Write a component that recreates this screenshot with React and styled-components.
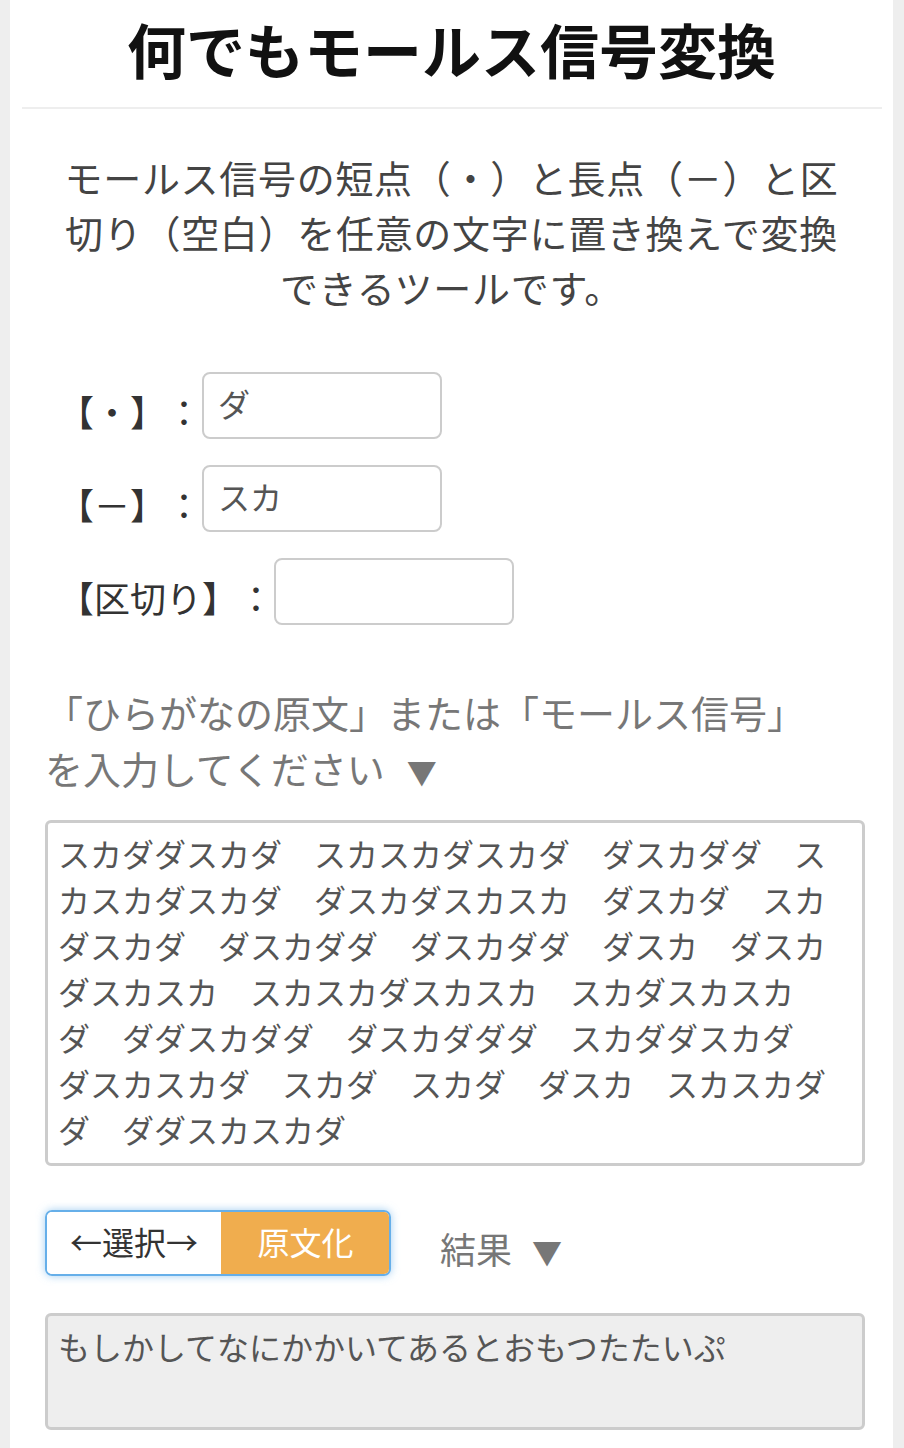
import { useState } from 'react';
import styled, { createGlobalStyle } from 'styled-components';

const GlobalStyle = createGlobalStyle`
  body {
    margin: 0;
    background: #eeeeee;
    font-family: "Noto Sans CJK JP", "Noto Sans", sans-serif;
    color: #333;
    text-spacing-trim: space-all;
  }
  input, textarea, button {
    text-spacing-trim: space-all;
  }
`;

const DOT = '・';
const DASH = '－';

// wabun codes for the sample text
const WABUN = {
  あ: '－－・－－',
  い: '・－',
  お: '・－・・・',
  か: '・－・・',
  し: '－－・－・',
  た: '－・',
  つ: '・－－・',
  て: '・－・－－',
  と: '・・－・・',
  な: '・－・',
  に: '－・－・',
  る: '－・－－・',
  も: '－・・－・',
  ぷ: '－－・・　・・－－・',
};

const SAMPLE = 'もしかしてなにかかいてあるとおもつたたいぷ';

const toMorse = (text, dot, dash, sep) => text
  .split('')
  .map((ch) => WABUN[ch] || '')
  .join('　')
  .split('')
  .map((c) => {
    if (c === DOT) return dot;
    if (c === DASH) return dash;
    return sep || '　';
  })
  .join('');

const Page = styled.div`
  width: 883px;
  margin-left: 10px;
  min-height: 1448px;
  background: #fff;
  padding-top: 9px;
  box-sizing: border-box;
`;

const Title = styled.h1`
  margin: 0;
  font-size: 59px;
  line-height: 80px;
  font-weight: 700;
  text-align: center;
  color: #111;
`;

const Divider = styled.hr`
  margin: 18px 11px 0 12px;
  border: 0;
  border-top: 2px solid #eeeeee;
`;

const Lead = styled.p`
  margin: 40px 0 0;
  padding: 0 52px;
  font-size: 38px;
  line-height: 55px;
  letter-spacing: 0.7px;
  text-align: center;
  color: #444;
`;

const Form = styled.div`
  display: flex;
  flex-direction: column;
  gap: 26px;
  margin-top: 58px;
  padding-left: 48px;
`;

const Row = styled.label`
  display: flex;
  align-items: center;
`;

const Label = styled.span`
  font-size: 36px;
  line-height: 40px;
  padding-top: 10px;
  color: #333;
`;

const TextInput = styled.input`
  width: 240px;
  height: 67px;
  box-sizing: border-box;
  margin: 0;
  padding: 0 14px 6px;
  border: 2px solid #cccccc;
  border-radius: 8px;
  font-family: inherit;
  font-size: 32px;
  color: #555;
  background: #fff;
  outline: none;
`;

const Hint = styled.p`
  margin: 59px 0 0;
  padding: 0 60px 0 35px;
  font-size: 38px;
  line-height: 56px;
  color: #777;
`;

const Arrow = styled.span`
  display: inline-block;
  margin-left: ${({ gap }) => gap}px;
  font-size: 30px;
`;

const Area = styled.textarea`
  display: block;
  width: 820px;
  height: 346px;
  box-sizing: border-box;
  margin: 21px 0 0 35px;
  padding: 7px 10px;
  border: 3px solid #cccccc;
  border-radius: 6px;
  font-family: inherit;
  font-size: 32px;
  line-height: 46px;
  color: #555;
  background: ${({ readOnly }) => (readOnly ? '#eeeeee' : '#fff')};
  white-space: break-spaces;
  resize: none;
  outline: none;
`;

const ResultArea = styled(Area)`
  height: 117px;
  margin-top: 37px;
`;

const Toolbar = styled.div`
  display: flex;
  align-items: center;
  gap: 49px;
  margin: 44px 0 0 35px;
`;

const Switch = styled.div`
  display: flex;
  width: 346px;
  height: 66px;
  box-sizing: border-box;
  border: 2px solid #66afe9;
  border-radius: 7px;
  overflow: hidden;
  box-shadow: 0 0 8px rgba(102, 175, 233, 0.6);
`;

const SwitchButton = styled.button`
  flex: ${({ active }) => (active ? '169px' : '174px')} 0 0;
  border: 0;
  margin: 0;
  padding: 0 0 4px;
  font-family: inherit;
  font-size: 32px;
  background: ${({ active }) => (active ? '#f0ad4e' : '#fff')};
  color: ${({ active }) => (active ? '#fff' : '#333')};
  cursor: pointer;
`;

const Caption = styled.span`
  font-size: 36px;
  line-height: 40px;
  padding-top: 12px;
  color: #777;
`;

export default function App() {
  const [dot, setDot] = useState('ダ');
  const [dash, setDash] = useState('スカ');
  const [sep, setSep] = useState('');
  const [mode, setMode] = useState('plain');
  const morse = toMorse(SAMPLE, dot, dash, sep);

  return (
    <>
      <GlobalStyle />
      <Page>
        <Title>何でもモールス信号変換</Title>
        <Divider />
        <Lead>
          モールス信号の短点（・）と長点（－）と区切り（空白）を任意の文字に置き換えで変換できるツールです。
        </Lead>
        <Form>
          <Row>
            <Label>【・】：</Label>
            <TextInput value={dot} onChange={(e) => setDot(e.target.value)} />
          </Row>
          <Row>
            <Label>【－】：</Label>
            <TextInput value={dash} onChange={(e) => setDash(e.target.value)} />
          </Row>
          <Row>
            <Label>【区切り】：</Label>
            <TextInput value={sep} onChange={(e) => setSep(e.target.value)} />
          </Row>
        </Form>
        <Hint>
          「ひらがなの原文」または「モールス信号」を入力してください<Arrow gap={22}>▼</Arrow>
        </Hint>
        <Area value={morse} onChange={() => {}} />
        <Toolbar>
          <Switch>
            <SwitchButton active={mode === 'morse'} onClick={() => setMode('morse')}>
              ←選択→
            </SwitchButton>
            <SwitchButton active={mode === 'plain'} onClick={() => setMode('plain')}>
              原文化
            </SwitchButton>
          </Switch>
          <Caption>
            結果<Arrow gap={20}>▼</Arrow>
          </Caption>
        </Toolbar>
        <ResultArea readOnly value={SAMPLE} />
      </Page>
    </>
  );
}
